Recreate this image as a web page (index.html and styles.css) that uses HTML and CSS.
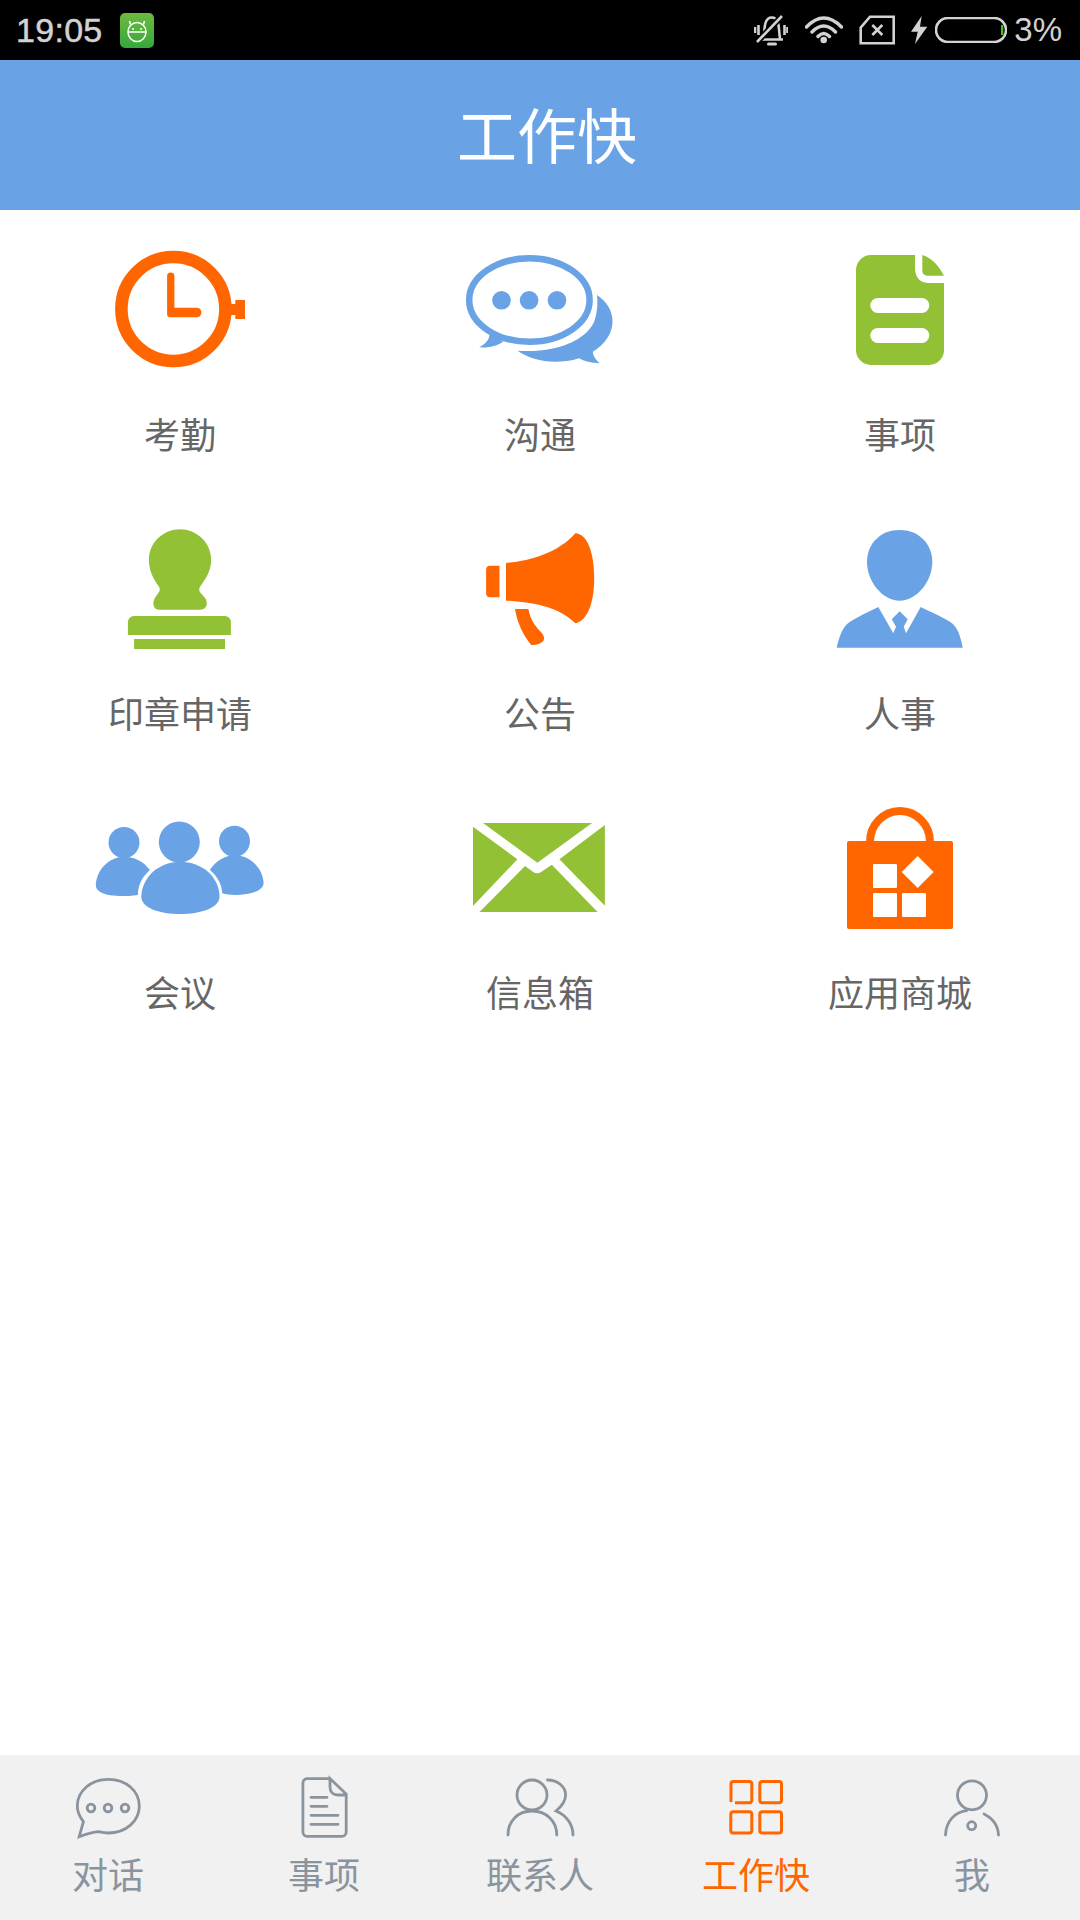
FILE: index.html
```html
<!DOCTYPE html>
<html lang="en">
<head>
	<meta charset="UTF-8">
	<title>工作快</title>
	<link rel="stylesheet" href="styles.css">
</head>
<body>
	<div class="statusBar">
		<div class="statusLeft">
			<span class="time">19:05</span>
			<div class="appLogo">
				<svg width="34" height="35" viewBox="120 13 34 35">
					<g class="lineWhite">
						<ellipse cx="137" cy="32" rx="9" ry="9.5"/>
						<path d="M128 32H146M130.500 24.500L129.500 21M143.500 24.500L144.500 21"/>
					</g>
					<circle class="fillWhite" cx="133" cy="29" r="1"/>
					<circle class="fillWhite" cx="141" cy="29" r="1"/>
				</svg>
			</div>
		</div>
		<div class="statusRight">
			<svg width="34" height="31" viewBox="754 14 34 31">
				<path class="lineGray" d="M763.500 37.500C765 31 763 16.500 771.700 16.500C780.500 16.500 778.500 31 780 37.500M760 38.500H783"/>
				<rect class="fillGray" x="767" y="41.500" width="10" height="3" rx="1.500"/>
				<path class="lineBlack" d="M782 15L757 41"/>
				<path class="lineGray" d="M782 15L757 41M755 26V32M758.500 24V34M784.500 24V34M787.500 26V32"/>
			</svg>
			<svg class="wifi" width="38" height="28" viewBox="805 15 38 28">
				<path class="lineGrayThick" d="M806.500 26Q823.700 8 841.500 26M812 31Q823.700 19 835.500 31M818 35.500Q823.700 29.500 829.500 35.500"/>
				<circle class="fillGray" cx="823.700" cy="39" r="3.300"/>
			</svg>
			<svg class="sim" width="36" height="30" viewBox="859 14 36 30">
				<path class="lineGray" d="M860.700 26.700L870 15.700H893.700V42.300H860.700ZM872.300 24L882.300 34M882.300 24L872.300 34"/>
			</svg>
			<svg class="bolt" width="17" height="29" viewBox="911 16 17 29">
				<path class="fillGray" d="M921.700 16L911 31.700H917.700L915 44L927.300 26.700H920Z"/>
			</svg>
			<svg class="battery" width="72" height="26" viewBox="935 17 72 26">
				<rect class="lineGray" x="936" y="18" width="70" height="24" rx="12"/>
				<rect class="fillGreenBar" x="1001" y="25" width="2.300" height="10"/>
			</svg>
			<span class="percent">3%</span>
		</div>
	</div>

	<div class="header">工作快</div>

	<div class="content">
		<div class="cell">
			<svg class="bigIcon" viewBox="80 230 200 150">
				<circle class="lineOrange" cx="173.400" cy="309" r="52"/>
				<path class="fillOrange" d="M167.100 276.200a3.600 3.600 0 0 1 7.300 0V307.700H196.600a4.800 4.800 0 0 1 0 9.600H170.100a3 3 0 0 1 -3 -3Z"/>
				<path class="fillOrange" d="M231 304H235.300V300H245V319H235.300V315H231Z"/>
			</svg>
			<p class="cellName">考勤</p>
		</div>
		<div class="cell">
			<svg class="bigIcon" viewBox="440 230 200 150">
				<ellipse class="lineBlueChat" cx="529.400" cy="300" rx="60.200" ry="41.800"/>
				<path class="fillBlue" d="M489.500 333C490 340 485 344 479.200 347.300C488 348 497 346 503.300 341.700Z"/>
				<path class="fillBlue" d="M597 295C606 301 612.500 310 612.500 321.700C612.500 334 604 345 592.800 351.700C593 356 596 360 599.700 363.300C591 363 584 361 579 358.300C571 361 563 361.700 555 361.700C541 361.700 527 357.500 517.700 350.700C530 351.500 540 351 550 349C572 345 588 335 594 322C597 314 598 304 597 295Z"/>
				<circle class="fillBlue" cx="501.500" cy="300.300" r="9.300"/>
				<circle class="fillBlue" cx="529.100" cy="300.300" r="9.300"/>
				<circle class="fillBlue" cx="557" cy="300.300" r="9.300"/>
			</svg>
			<p class="cellName">沟通</p>
		</div>
		<div class="cell">
			<svg class="bigIcon" viewBox="800 230 200 150">
				<path class="fillGreen" d="M871 255H915V268C915 277 920 283 929 283H944V350A15 15 0 0 1 929 365H871A15 15 0 0 1 856 350V270A15 15 0 0 1 871 255Z"/>
				<path class="fillGreen" d="M922.300 255C932 258 939 266 944 275.700H927A4.700 4.700 0 0 1 922.300 271Z"/>
				<rect class="fillWhite" x="870.300" y="298" width="59" height="15" rx="7.500"/>
				<rect class="fillWhite" x="870.300" y="328" width="59" height="15" rx="7.500"/>
			</svg>
			<p class="cellName">事项</p>
		</div>

		<div class="cell">
			<svg class="bigIcon" viewBox="80 509 200 150">
				<path class="fillGreen" d="M179.900 529.300C196 529.300 211.200 542 211.200 560C211.200 572 204 581 200.500 586C198.500 589 199 591 201 593.500C204 596.500 206.800 599 206.800 603.300C206.800 607.500 204 609.700 200 609.700H159C155.500 609.700 153.400 607.500 153.400 603.300C153.400 599 156 596.500 158 593.500C160 591 160.500 589 158.500 586C155 581 148.900 572 148.900 560C148.900 542 164 529.300 179.900 529.300Z"/>
				<path class="fillGreen" d="M134 616H224.900A6 6 0 0 1 230.900 622V635H127.900V622A6 6 0 0 1 134 616Z"/>
				<rect class="fillGreen" x="134.100" y="639" width="90.900" height="10"/>
			</svg>
			<p class="cellName">印章申请</p>
		</div>
		<div class="cell">
			<svg class="bigIcon" viewBox="440 509 200 150">
				<path class="fillOrange" d="M499.500 565.700V597.300H490A4 4 0 0 1 486.100 593.300V569.700A4 4 0 0 1 490 565.700Z"/>
				<path class="fillOrange" d="M506 563C530 561 558 553 575.300 533.300C587 533.500 594.200 552 594.200 578C594.200 604 587 621 575.300 623.300C558 606 530 602 506 600.700Z"/>
				<path class="fillOrange" d="M515 609H528.400C530 619 535 626 541 632C545 636.500 545 640 541.500 642.500C538.500 644.500 535 645 531.200 645C523 635 517 622 515 609Z"/>
			</svg>
			<p class="cellName">公告</p>
		</div>
		<div class="cell">
			<svg class="bigIcon" viewBox="800 509 200 150">
				<path class="fillBlue" d="M899.700 530C918 530 932.300 543 932.300 562C932.300 581 917 600.700 899.700 600.700C882 600.700 867 581 867 562C867 543 881 530 899.700 530Z"/>
				<path class="fillBlue" d="M836.700 647.700C839 638 842 628 848 623.300C855 618 868 612 878.300 607L893.300 633.300L896 626.700L891.700 619.300L899.700 611.300L907.700 619.300L903.700 626.700L906 633.300L920.700 607C931 612 945 618 952 623.300C958 628 961 638 962.700 647.700Z"/>
			</svg>
			<p class="cellName">人事</p>
		</div>

		<div class="cell">
			<svg class="bigIcon" viewBox="80 788 200 150">
				<circle class="fillBlue" cx="124" cy="842.500" r="15.500"/>
				<path class="fillBlue" d="M95.800 885C97 868 110 857 124 856.700C135 856.700 144 862 149.900 870C142 877 138 885 137.900 895C132 896 127 896 121.300 896C108 896 95.800 893 95.800 885Z"/>
				<circle class="fillBlue" cx="234.500" cy="841.200" r="15.500"/>
				<path class="fillBlue" d="M209.800 870C216 861 225 855.300 234.600 855.300C250 855.300 263 868 263.600 883C263.600 891 250 895 235 895C230 895 226 894.500 222.200 893.300C222 884 217 876 209.800 870Z"/>
				<circle class="fillBlue" cx="179.300" cy="842" r="20.500"/>
				<path class="fillBlue" d="M141.300 896.700C141.800 877 159 861.700 180.200 861.700C202 861.700 219.500 877 219.500 896.700C219.500 908 200 914 180.200 914C160 914 141.300 908 141.300 896.700Z"/>
			</svg>
			<p class="cellName">会议</p>
		</div>
		<div class="cell">
			<svg class="bigIcon" viewBox="440 788 200 150">
				<path class="fillGreen" d="M483 823H592.100L537.400 862.700Z"/>
				<path class="fillGreen" d="M473 826.700L517.400 859.300L473 906Z"/>
				<path class="fillGreen" d="M604.900 825L559.400 859.300L604.900 905.700Z"/>
				<path class="fillGreen" d="M479.500 912L525 866L532.900 871.700Q537.400 874.800 541.500 871.700L551.800 864.700L597.600 912Z"/>
			</svg>
			<p class="cellName">信息箱</p>
		</div>
		<div class="cell">
			<svg class="bigIcon" viewBox="800 788 200 150">
				<path class="lineOrangeBag" d="M870 842A30 31 0 0 1 930 842"/>
				<rect class="fillOrange" x="847" y="841" width="106" height="88" rx="2"/>
				<rect class="fillWhite" x="873" y="864" width="24" height="24" rx="1"/>
				<rect class="fillWhite" x="873" y="893" width="24" height="24" rx="1"/>
				<rect class="fillWhite" x="902" y="893" width="24" height="24" rx="1"/>
				<path class="fillWhite" d="M917.700 856L933.700 872L917.700 888L901.700 872Z"/>
			</svg>
			<p class="cellName">应用商城</p>
		</div>
	</div>

	<div class="tabBar">
		<div class="tab">
			<svg class="tabIcon" viewBox="58 1770 100 70">
				<path class="lineNav" d="M79.200 1836.700L83.400 1821.700C79 1816 77.300 1811 77.300 1806C77.300 1791 91 1779.300 108.300 1779.300C126 1779.300 139.300 1791 139.300 1806C139.300 1821 126 1833 108.300 1833C105 1833 102 1832.500 98.700 1831.700C92 1832 85 1834.500 79.200 1836.700Z"/>
				<circle class="lineNav" cx="91" cy="1808" r="3.800"/>
				<circle class="lineNav" cx="108" cy="1808" r="3.800"/>
				<circle class="lineNav" cx="125" cy="1808" r="3.800"/>
			</svg>
			<p class="tabName">对话</p>
		</div>
		<div class="tab">
			<svg class="tabIcon" viewBox="274 1770 100 70">
				<path class="lineNav" d="M330 1778.600H307A4.500 4.500 0 0 0 302.900 1783V1832A4.500 4.500 0 0 0 307 1836.400H342A4.500 4.500 0 0 0 346.200 1832V1794L330 1778.600V1787C330 1792 333 1795 338 1795H346.200"/>
				<path class="lineNav" d="M311 1797.300H327M311 1806.300H327M311 1815.300H338M311 1824.300H338"/>
			</svg>
			<p class="tabName">事项</p>
		</div>
		<div class="tab">
			<svg class="tabIcon" viewBox="490 1770 100 70">
				<circle class="lineNav" cx="532" cy="1795" r="15"/>
				<path class="lineNav" d="M508 1835C508 1821 518 1811 532 1811C546 1811 556.800 1821 556.800 1835"/>
				<path class="lineNav" d="M547.500 1780C558 1780 565.600 1787 565.600 1795C565.600 1801 562 1806 556 1811C566 1815 573 1824 573 1835"/>
			</svg>
			<p class="tabName">联系人</p>
		</div>
		<div class="tab tabActive">
			<svg class="tabIcon" viewBox="706 1770 100 70">
				<path class="lineActive" d="M731 1802V1784A2.500 2.500 0 0 1 733.500 1781.500H749.300A2.500 2.500 0 0 1 751.800 1784V1800.300A2.500 2.500 0 0 1 749.300 1802.800H735"/>
				<rect class="lineActive" x="759.800" y="1781.500" width="21.700" height="21.300" rx="2.500"/>
				<rect class="lineActive" x="730.800" y="1811.800" width="21" height="21.300" rx="2.500"/>
				<rect class="lineActive" x="759.800" y="1811.800" width="21.700" height="21.300" rx="2.500"/>
			</svg>
			<p class="tabName">工作快</p>
		</div>
		<div class="tab">
			<svg class="tabIcon" viewBox="922 1770 100 70">
				<circle class="lineNav" cx="972" cy="1795.300" r="14.500"/>
				<path class="lineNav" d="M945.500 1835C946 1821 955 1812 966.700 1810.700M984 1814C992 1818 998 1825 998.500 1835"/>
				<circle class="lineNav" cx="971.700" cy="1825.700" r="4"/>
			</svg>
			<p class="tabName">我</p>
		</div>
	</div>
</body>
</html>
```

FILE: styles.css
```css
*{box-sizing:border-box;}
html,body{margin:0;padding:0;}
body{display:flex;flex-direction:column;width:1080px;height:1920px;background:#fff;font-family:"Noto Sans CJK SC","Liberation Sans",sans-serif;}
p{margin:0;}
svg{display:block;}

.statusBar{display:flex;justify-content:space-between;align-items:center;flex:none;height:60px;padding:0 18px 0 16px;background:#000;color:#d2d2d2;font-family:"Liberation Sans",sans-serif;}
.statusLeft{display:flex;align-items:center;}
.statusRight{display:flex;align-items:center;}
.time{width:104px;font-size:34px;line-height:60px;letter-spacing:.3px;-webkit-text-stroke:.5px #d2d2d2;}
.appLogo{width:34px;height:35px;border-radius:5px;background:linear-gradient(#6cbb3f,#36a73b);}
.wifi{margin-left:17px;}
.sim{margin-left:16px;}
.bolt{margin-left:16px;}
.battery{margin-left:7px;}
.percent{margin-left:7px;font-size:33px;line-height:60px;}

.fillGray{fill:#d2d2d2;}
.fillWhite{fill:#fff;}
.fillGreenBar{fill:#4fc31c;}
.lineWhite{fill:none;stroke:#fff;stroke-width:1.5;}
.lineGray{fill:none;stroke:#d2d2d2;stroke-width:2.6;}
.lineGrayThick{fill:none;stroke:#d2d2d2;stroke-width:3.4;stroke-linecap:round;}
.lineBlack{fill:none;stroke:#000;stroke-width:6;}

.header{flex:none;height:150px;padding:0 0 4px 14px;background:#69a3e6;color:#fff;font-size:60px;line-height:146px;text-align:center;}

.content{flex:1;display:grid;grid-template-columns:repeat(3,360px);grid-auto-rows:279px;align-content:start;}
.cell{display:flex;flex-direction:column;align-items:center;padding-top:20px;}
.bigIcon{width:200px;height:150px;}
.cellName{margin-top:28px;font-size:36px;line-height:50px;color:#666;}

.fillOrange{fill:#ff6600;}
.fillBlue{fill:#69a3e6;}
.fillGreen{fill:#92c135;}
.lineOrange{fill:none;stroke:#ff6600;stroke-width:12.6;}
.lineOrangeBag{fill:none;stroke:#ff6600;stroke-width:8;}
.lineBlueChat{fill:none;stroke:#69a3e6;stroke-width:6.5;}

.tabBar{flex:none;display:flex;height:165px;background:#f1f1f1;padding-top:15px;}
.tab{flex:1;display:flex;flex-direction:column;align-items:center;color:#8a949e;}
.tabIcon{width:100px;height:70px;}
.tabName{margin-top:8px;font-size:36px;line-height:50px;}
.tabActive{color:#ff6600;}

.lineNav{fill:none;stroke:#8a949e;stroke-width:2.8;stroke-linecap:round;}
.lineActive{fill:none;stroke:#ff6600;stroke-width:3;}
```
